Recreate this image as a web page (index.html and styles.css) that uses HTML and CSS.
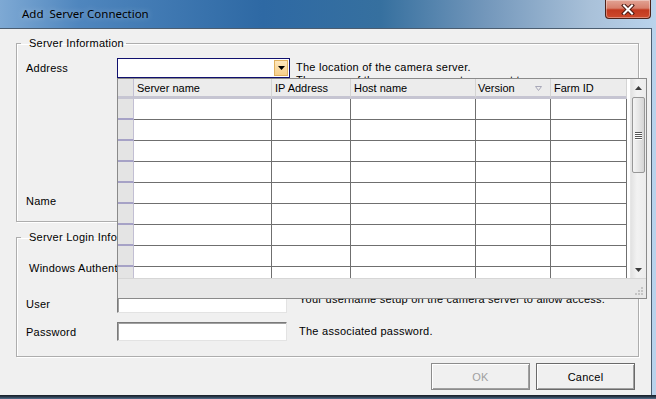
FILE: index.html
```html
<!DOCTYPE html>
<html lang="en">
<head>
  <meta charset="UTF-8">
  <meta name="viewport" content="width=device-width, initial-scale=1.0">
  <title>Add Server Connection</title>
  <link rel="stylesheet" href="styles.css">
</head>
<body>
  <div class="window">
    <div class="titlebar">
      <span class="title">Add&nbsp; Server Connection</span>
      <div class="close-btn">
        <svg width="14" height="11" viewBox="0 0 14 11">
          <path d="M3 1.5 L11 9.5 M11 1.5 L3 9.5" stroke="#4a1810" stroke-width="4" stroke-linecap="square"/>
          <path d="M3 1.5 L11 9.5 M11 1.5 L3 9.5" stroke="#ffffff" stroke-width="2" stroke-linecap="square"/>
        </svg>
      </div>
    </div>

    <div class="client">
      <fieldset class="group group-server">
        <legend>Server Information</legend>

        <div class="row row-address">
          <label class="label">Address</label>
          <div class="combo focused">
            <div class="combo-text"></div>
            <div class="combo-arrow">
              <svg width="7" height="4" viewBox="0 0 7 4"><path d="M0 0 H7 L3.5 4 Z" fill="#000"/></svg>
            </div>

            <!-- open dropdown list -->
            <div class="dropdown">
              <div class="dd-body">
                <div class="dd-grid">
                  <div class="grid-row grid-head">
                    <div class="cell corner"></div>
                    <div class="cell">Server name</div>
                    <div class="cell">IP Address</div>
                    <div class="cell">Host name</div>
                    <div class="cell sorted">Version
                      <svg class="sort-icon" width="7" height="5" viewBox="0 0 7 5"><path d="M0.5 0.5 H6.5 L3.5 4.5 Z" fill="none" stroke="#a8a8b8" stroke-width="1"/></svg>
                    </div>
                    <div class="cell">Farm ID</div>
                  </div>
                  <div class="grid-row"><div class="cell rh"></div><div class="cell"></div><div class="cell"></div><div class="cell"></div><div class="cell"></div><div class="cell"></div></div>
                  <div class="grid-row"><div class="cell rh"></div><div class="cell"></div><div class="cell"></div><div class="cell"></div><div class="cell"></div><div class="cell"></div></div>
                  <div class="grid-row"><div class="cell rh"></div><div class="cell"></div><div class="cell"></div><div class="cell"></div><div class="cell"></div><div class="cell"></div></div>
                  <div class="grid-row"><div class="cell rh"></div><div class="cell"></div><div class="cell"></div><div class="cell"></div><div class="cell"></div><div class="cell"></div></div>
                  <div class="grid-row"><div class="cell rh"></div><div class="cell"></div><div class="cell"></div><div class="cell"></div><div class="cell"></div><div class="cell"></div></div>
                  <div class="grid-row"><div class="cell rh"></div><div class="cell"></div><div class="cell"></div><div class="cell"></div><div class="cell"></div><div class="cell"></div></div>
                  <div class="grid-row"><div class="cell rh"></div><div class="cell"></div><div class="cell"></div><div class="cell"></div><div class="cell"></div><div class="cell"></div></div>
                  <div class="grid-row"><div class="cell rh"></div><div class="cell"></div><div class="cell"></div><div class="cell"></div><div class="cell"></div><div class="cell"></div></div>
                  <div class="grid-row"><div class="cell rh"></div><div class="cell"></div><div class="cell"></div><div class="cell"></div><div class="cell"></div><div class="cell"></div></div>
                </div>
                <div class="vscroll">
                  <div class="sb-btn">
                    <svg width="7" height="4" viewBox="0 0 7 4"><path d="M0 4 H7 L3.5 0 Z" fill="#3c3c3c"/></svg>
                  </div>
                  <div class="sb-thumb">
                    <span class="grip"></span><span class="grip"></span><span class="grip"></span><span class="grip"></span>
                  </div>
                  <div class="sb-track"></div>
                  <div class="sb-btn">
                    <svg width="7" height="4" viewBox="0 0 7 4"><path d="M0 0 H7 L3.5 4 Z" fill="#3c3c3c"/></svg>
                  </div>
                </div>
              </div>
              <div class="dd-footer">
                <svg class="size-grip" width="10" height="10" viewBox="0 0 10 10">
                  <rect x="7" y="1" width="2" height="2" fill="#c4c4c4"/>
                  <rect x="4" y="4" width="2" height="2" fill="#c4c4c4"/>
                  <rect x="7" y="4" width="2" height="2" fill="#c4c4c4"/>
                  <rect x="1" y="7" width="2" height="2" fill="#c4c4c4"/>
                  <rect x="4" y="7" width="2" height="2" fill="#c4c4c4"/>
                  <rect x="7" y="7" width="2" height="2" fill="#c4c4c4"/>
                </svg>
              </div>
            </div>
          </div>
          <div class="hint">The location of the camera server.<br>The name of the camera server to connect to.</div>
        </div>

        <div class="row row-name">
          <label class="label">Name</label>
          <div class="textbox wide"></div>
        </div>
      </fieldset>

      <fieldset class="group group-login">
        <legend>Server Login Information</legend>

        <div class="row row-auth">
          <label class="label label-auth">Windows Authentication</label>
          <div class="combo"></div>
        </div>

        <div class="row row-user">
          <label class="label">User</label>
          <div class="textbox"></div>
          <div class="hint hint-side hint-top">Your username setup on the camera server to allow access.</div>
        </div>

        <div class="row row-password">
          <label class="label">Password</label>
          <div class="textbox"></div>
          <div class="hint hint-side">The associated password.</div>
        </div>
      </fieldset>

      <div class="buttons">
        <button class="btn" disabled>OK</button>
        <button class="btn">Cancel</button>
      </div>
    </div>

    <div class="frame-bottom"></div>
  </div>
</body>
</html>
```

FILE: styles.css
```css
* {
  box-sizing: border-box;
}
body {
  margin: 0;
  font-family: "Liberation Sans", Arial, sans-serif;
  font-size: 11px;
  color: #000;
}
.window {
  width: 656px;
  height: 399px;
  display: flex;
  flex-direction: column;
  overflow: hidden;
  background: linear-gradient(90deg, #7ea9d4 0%, #4f86be 12%, #2e69a4 40%, #36709f 58%, #7397bb 74%, #a9c1d9 90%, #b9d3ec 100%);
}

/* title bar */
.titlebar {
  height: 28px;
  flex: none;
  display: flex;
  align-items: flex-start;
  padding-left: 22px;
  padding-right: 5px;
}
.title {
  font-family: "Noto Sans", "Open Sans", sans-serif;
  font-size: 11.5px;
  line-height: 28px;
  color: #000;
  text-shadow: 0 0 6px rgba(255, 255, 255, 0.45);
}
.close-btn {
  margin-left: auto;
  width: 46px;
  height: 19px;
  border: 1px solid #4c2219;
  border-top: none;
  border-radius: 0 0 4px 4px;
  background: linear-gradient(180deg, #e2a394 0%, #d7806c 45%, #c2391f 55%, #cd4a2c 100%);
  box-shadow: inset 0 0 0 1px rgba(255, 255, 255, 0.35);
  display: flex;
  align-items: center;
  justify-content: center;
}

/* dialog body */
.client {
  height: 367px;
  flex: none;
  margin-right: 4px;
  background: #f0f0f0;
  border-top: 1px solid #4b5d70;
  border-right: 1px solid #4b5d70;
  padding: 7px 12px 0 16px;
  display: flex;
  flex-direction: column;
  letter-spacing: 0.25px;
}
.frame-bottom {
  flex: 1;
  background: linear-gradient(180deg, #161c24 0%, #2c3c4e 50%, #55718e 100%);
}

.group {
  margin: 0;
  padding: 0 8px 0 0;
  border: 1px solid #adadad;
  box-shadow: inset 1px 1px 0 #fff, 1px 1px 0 #fff;
}
.group legend {
  margin-left: 4px;
  padding: 0 2px 0 8px;
  line-height: 14px;
}
.group-server {
  padding-bottom: 10px;
}
.group-login {
  margin-top: 8px;
  padding-bottom: 15px;
}

.row {
  display: flex;
  align-items: flex-start;
  padding-left: 9px;
}
.label {
  width: 91px;
  flex: none;
  line-height: 20px;
}
.row-address {
  margin-top: 8px;
}
.row-name {
  margin-top: 104px;
}
.row-auth {
  margin-top: 14px;
}
.row-auth .label-auth {
  padding-left: 3px;
  white-space: nowrap;
}
.row-user,
.row-password {
  height: 19px;
  align-items: center;
}
.row-user {
  margin-top: 16px;
}
.row-password {
  margin-top: 9px;
}
.row-user .label,
.row-password .label {
  line-height: 19px;
  padding-top: 2px;
}

.hint {
  margin-left: 6px;
  margin-top: 3px;
  line-height: 13px;
  white-space: nowrap;
}
.hint-side {
  margin-left: 12px;
  margin-top: 0;
}
.hint-side.hint-top {
  align-self: flex-start;
  margin-top: -1px;
}

.textbox {
  width: 170px;
  height: 19px;
  background: #fff;
  border: 1px solid;
  border-color: #7a7a7a #e3e3e3 #e3e3e3 #7a7a7a;
  box-shadow: inset 1px 1px 0 #a0a0a0;
}
.textbox.wide {
  width: 400px;
  height: 20px;
}

/* combo box */
.combo {
  position: relative;
  width: 173px;
  height: 20px;
  background: #fff;
  border: 1px solid #7a7a7a;
  display: flex;
}
.combo.focused {
  border-color: #10106e;
}
.combo-text {
  flex: 1;
}
.combo-arrow {
  width: 14px;
  margin: 1px 1px 1px 0;
  background: linear-gradient(180deg, #fde7bd 0%, #f6cf8a 100%);
  border: 1px solid #e0b160;
  display: flex;
  align-items: center;
  justify-content: center;
}

/* dropdown grid */
.dropdown {
  position: absolute;
  top: 19px;
  left: -1px;
  z-index: 10;
  width: 530px;
  height: 221px;
  border: 1px solid #8a8a8a;
  background: #e9e9e9;
  display: flex;
  flex-direction: column;
  letter-spacing: 0;
}
.dd-body {
  height: 199px;
  display: flex;
}
.dd-grid {
  width: 512px;
  background: #fff;
  overflow: hidden;
}
.grid-row {
  display: grid;
  grid-template-columns: 16px 138px 79px 125px 75px 76px;
  height: 21px;
}
.cell {
  border-right: 1px solid #6f6f6f;
  border-bottom: 1px solid #6f6f6f;
  background: #fff;
}
.cell.rh {
  background: #e4e4e4;
  border-right: 1px solid #c2bfd3;
  border-bottom: 2px solid #a6a2c6;
}
.grid-head {
  height: 20px;
}
.grid-head .cell {
  background: #ececec;
  border-right: 1px solid #d4d4d4;
  border-bottom: 3px solid #c6c5d2;
  padding: 2px 0 0 3px;
  line-height: 15px;
  white-space: nowrap;
}
.grid-head .corner {
  background: #e4e4e4;
  border-right: 1px solid #c2bfd3;
}
.grid-head .sorted {
  display: flex;
  align-items: center;
  padding-left: 2px;
}
.sort-icon {
  margin-left: 20px;
}

.vscroll {
  width: 16px;
  background: linear-gradient(90deg, #e2e2e2 0%, #f2f2f2 40%, #ececec 100%);
  border-left: 1px solid #e6e6e6;
  display: flex;
  flex-direction: column;
}
.sb-btn {
  height: 17px;
  display: flex;
  align-items: center;
  justify-content: center;
}
.sb-thumb {
  height: 76px;
  margin: 1px 1px 0 1px;
  border: 1px solid #979797;
  border-radius: 2px;
  background: linear-gradient(90deg, #f4f4f4 0%, #e6e6e6 50%, #d5d5d5 100%);
  display: flex;
  flex-direction: column;
  align-items: center;
  justify-content: center;
  gap: 1px;
}
.grip {
  width: 7px;
  height: 1px;
  background: #555;
  box-shadow: 0 1px 0 #fff;
}
.sb-track {
  flex: 1;
}
.dd-footer {
  flex: 1;
  background: #e8e8e8;
  border-top: 1px solid #d6d6d6;
  display: flex;
  justify-content: flex-end;
  align-items: flex-end;
  padding: 0 2px 2px 0;
}

/* buttons */
.buttons {
  margin-top: 6px;
  margin-right: 4px;
  display: flex;
  justify-content: flex-end;
  gap: 6px;
}
.btn {
  width: 99px;
  height: 27px;
  font-family: "Liberation Sans", Arial, sans-serif;
  font-size: 11px;
  letter-spacing: 0.25px;
  color: #000;
  background: #f0f0f0;
  border: 1px solid #6a6a6a;
  box-shadow: inset 1px 1px 0 #fff, inset -1px -1px 0 #a0a0a0;
  padding: 0;
}
.btn:disabled {
  color: #a0a0a0;
  border-color: #8c8c8c;
}
```
